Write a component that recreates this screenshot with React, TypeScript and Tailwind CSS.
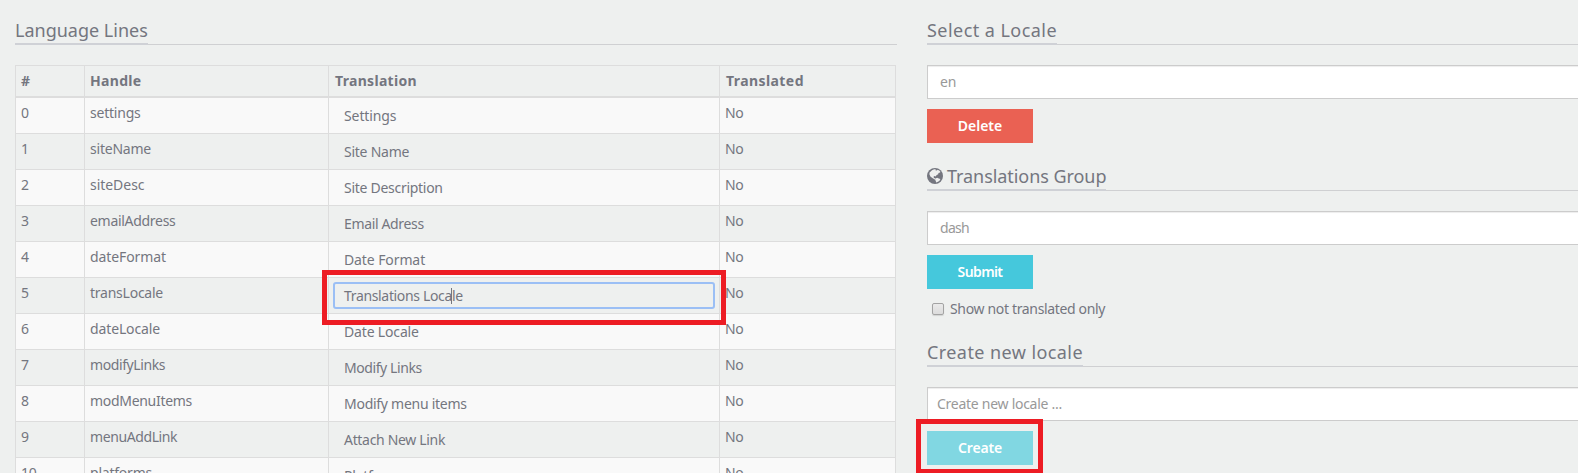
import type { ReactNode } from "react";

type Line = {
  handle: string;
  handleClass: string;
  text: string;
  textClass: string;
  focused?: boolean;
};

const lines: Line[] = [
  { handle: "settings", handleClass: "tracking-[-0.22px]", text: "Settings", textClass: "tracking-[-0.1px]" },
  { handle: "siteName", handleClass: "tracking-[-0.22px]", text: "Site Name", textClass: "tracking-[-0.25px]" },
  { handle: "siteDesc", handleClass: "tracking-[-0.04px]", text: "Site Description", textClass: "tracking-[-0.28px]" },
  { handle: "emailAddress", handleClass: "tracking-[-0.3px]", text: "Email Adress", textClass: "tracking-[-0.35px]" },
  { handle: "dateFormat", handleClass: "tracking-[-0.09px]", text: "Date Format", textClass: "tracking-[-0.1px]" },
  { handle: "transLocale", handleClass: "tracking-[-0.24px]", text: "Translations Locale", textClass: "tracking-[-0.34px]", focused: true },
  { handle: "dateLocale", handleClass: "tracking-[-0.13px]", text: "Date Locale", textClass: "tracking-[-0.16px]" },
  { handle: "modifyLinks", handleClass: "tracking-[-0.4px]", text: "Modify Links", textClass: "tracking-[-0.42px]" },
  { handle: "modMenuItems", handleClass: "tracking-[-0.3px]", text: "Modify menu items", textClass: "tracking-[-0.27px]" },
  { handle: "menuAddLink", handleClass: "tracking-[-0.4px]", text: "Attach New Link", textClass: "tracking-[-0.32px]" },
  { handle: "platforms", handleClass: "tracking-[-0.22px]", text: "Platforms", textClass: "tracking-[-0.22px]" },
];

const columns = "grid grid-cols-[69px_244px_391px_176px]";
const cell = "border-r border-b border-[#dddddd] px-[5px] pt-[5px]";
const headCell = "border-r border-b-2 border-[#dddddd] pr-[5px] pt-[5px]";

function Heading({ children, className = "" }: { children: ReactNode; className?: string }) {
  return (
    <h3 className={`flex h-[27px] border-b border-[#cfd0d2] text-[18px] leading-6 ${className}`}>
      <span className="-mb-px flex h-[27px] items-start border-b-2 border-[#cfd1d6] whitespace-nowrap">{children}</span>
    </h3>
  );
}

function Field({ children, className }: { children: ReactNode; className: string }) {
  return (
    <div className={`mt-5 h-[34px] border border-[#cccccc] bg-white py-1.5 text-[#999999] shadow-[inset_0_1px_1px_rgba(0,0,0,0.075)] ${className}`}>
      {children}
    </div>
  );
}

function Button({ children, className }: { children: ReactNode; className: string }) {
  return (
    <button className={`mt-2.5 block h-[34px] w-[106px] text-center font-semibold text-white ${className}`}>
      {children}
    </button>
  );
}

function Globe() {
  return (
    <svg viewBox="0 0 16 16" className="mt-[4px] mr-[4px] h-4 w-4">
      <circle cx="8" cy="8" r="8" fill="#74767f" />
      <path
        d="M5 2.2 7.2 1.2 9 1.4l-.6.9 1.3.3 1-.8 1.9.9.9 1.2-1 .8-1 .2-.3 1.3-1.5.8-1.1 1.4-1.2-.4-.9.8.5 1.2 1.5.4.3 1.1-1-.1L5 9.8 3.4 8.4 2.4 6.2 2.6 4.4z"
        fill="#eef0ef"
      />
      <path d="m8.6 10.4 1.5-.6 1.7.6 1.6.7-.9 1.6-1.5 1.1-1.9.7-.3-1.5-.7-1.3z" fill="#eef0ef" />
    </svg>
  );
}

export default function App() {
  return (
    <div className="relative h-[473px] w-full overflow-hidden bg-[#eef0ef] font-['Noto_Sans',sans-serif] text-[14px] leading-5 text-[#74767f]">
      <div className="flex">
        <section className="ml-[15px] w-[882px] shrink-0 pt-[18px]">
          <Heading>Language Lines</Heading>
          <div className="mt-5 w-[881px] border-t border-l border-[#dddddd]">
            <div className={`${columns} h-8 font-bold`}>
              <div className={`${headCell} pl-[5px]`}>#</div>
              <div className={`${headCell} pl-[5px] tracking-[0.32px]`}>Handle</div>
              <div className={`${headCell} pl-1.5 tracking-[0.31px]`}>Translation</div>
              <div className={`${headCell} pl-1.5 tracking-[0.42px]`}>Translated</div>
            </div>
            {lines.map((line, i) => (
              <div key={line.handle} className={`${columns} h-9 ${i % 2 === 0 ? "bg-[#f9f9f9]" : ""}`}>
                <div className={`${cell} tracking-[-0.3px]`}>{i}</div>
                <div className={`${cell} ${line.handleClass}`}>{line.handle}</div>
                <div className="border-r border-b border-[#dddddd] px-1 pt-1">
                  <div
                    className={`h-[27px] rounded-[3px] border-2 pt-[2px] pl-[9px] ${line.textClass} ${
                      line.focused ? "border-[#9bbff5]" : "border-transparent"
                    }`}
                  >
                    {line.text}
                  </div>
                </div>
                <div className={`${cell} tracking-[-0.3px]`}>No</div>
              </div>
            ))}
          </div>
        </section>

        <section className="ml-[30px] w-[700px] shrink-0 pt-[18px]">
          <Heading>
            <span className="tracking-[0.45px]">Select a Locale</span>
          </Heading>
          <Field className="pl-3 tracking-[-0.27px]">en</Field>
          <Button className="bg-[#ea6153]">Delete</Button>

          <Heading className="mt-[21px]">
            <Globe />
            <span className="tracking-[-0.06px]">Translations Group</span>
          </Heading>
          <Field className="pl-3 tracking-[-0.7px]">dash</Field>
          <Button className="bg-[#45c8dc] tracking-[-0.6px]">Submit</Button>
          <label className="mt-2.5 flex h-5 pl-[5px] tracking-[-0.34px]">
            <span className="mt-1 mr-[6px] h-3 w-3 rounded-[2px] border border-[#a3a3a3] bg-linear-to-b from-[#eaeaea] to-[#dcdcdc] shadow-[0_1px_1px_rgba(0,0,0,0.12)]" />
            Show not translated only
          </label>

          <Heading className="mt-[21px]">
            <span className="tracking-[0.42px]">Create new locale</span>
          </Heading>
          <Field className="pl-[9px] tracking-[-0.27px]">Create new locale ...</Field>
          <Button className="bg-[#81d7e2] tracking-[-0.16px]">Create</Button>
        </section>
      </div>

      <div className="absolute top-[288px] left-[451px] h-4 w-px bg-[#74767f]" />
      <div className="absolute top-[270px] left-[322px] h-[55px] w-[404px] border-[5px] border-[#ed1c24]" />
      <div className="absolute top-[419px] left-[916px] h-[55px] w-[127px] border-[5px] border-[#ed1c24]" />
    </div>
  );
}
